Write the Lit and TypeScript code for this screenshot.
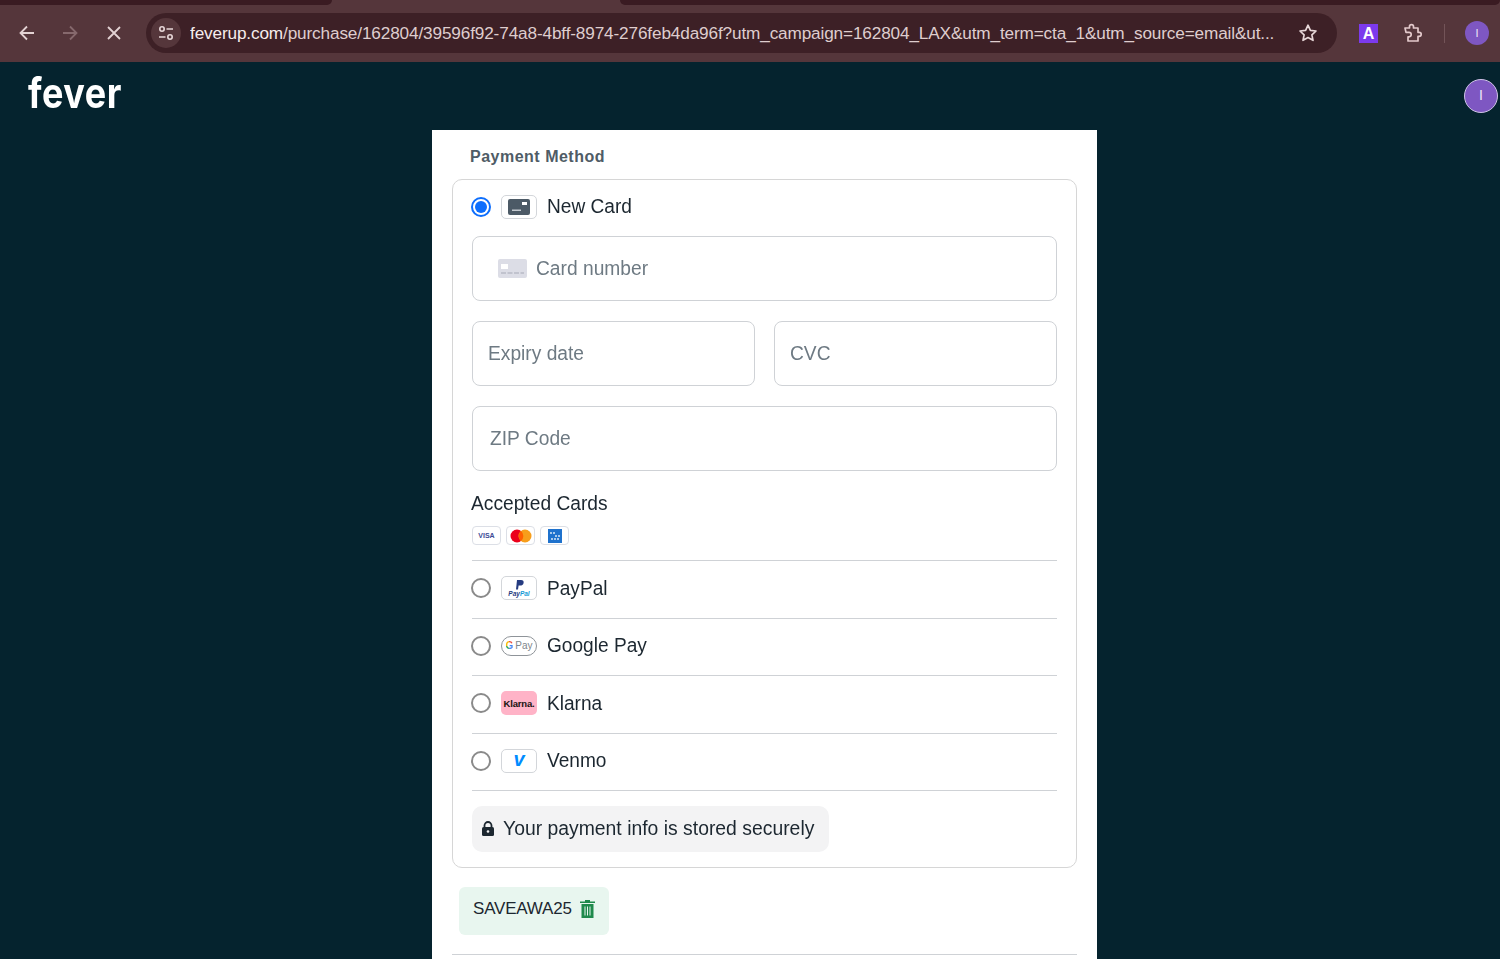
import { LitElement, html, css } from 'lit';
import { customElement } from 'lit/decorators.js';

const URL_TEXT = 'feverup.com/purchase/162804/39596f92-74a8-4bff-8974-276feb4da96f?utm_campaign=162804_LAX&utm_term=cta_1&utm_source=email&ut...';

@customElement('browser-bar')
export class BrowserBar extends LitElement {
    static styles = css`
        :host {
            display: block;
            height: 62px;
            background: #55363b;
            font-family: 'Liberation Sans', Arial, sans-serif;
            overflow: hidden;
        }

        .tabs {
            height: 5px;
            display: flex;
        }

        .tab {
            background: #3a1b22;
            border-radius: 0 0 8px 0;
        }

        .tab.one { width: 332px; }

        .tab.two {
            width: 880px;
            margin-left: 288px;
            border-radius: 0 0 8px 8px;
        }

        .row {
            display: flex;
            align-items: center;
            height: 40px;
            margin-top: 8px;
            padding-left: 17px;
        }

        .nav {
            width: 20px;
            height: 20px;
            margin-right: 23px;
            flex: none;
        }

        .nav.mid { margin-right: 24px; }
        .nav.last { margin-right: 22px; }

        .omni {
            width: 1191px;
            height: 40px;
            flex: none;
            display: flex;
            align-items: center;
            border-radius: 20px;
            background: #3d2026;
            padding: 0 19px 0 5px;
            box-sizing: border-box;
        }

        .tune {
            width: 30px;
            height: 30px;
            border-radius: 50%;
            background: #55363b;
            display: flex;
            align-items: center;
            justify-content: center;
            flex: none;
            margin-right: 9px;
        }

        .url {
            flex: 1;
            font-size: 17.2px;
            letter-spacing: -0.14px;
            color: #dfcdce;
            white-space: nowrap;
            overflow: hidden;
        }

        .url b {
            font-weight: 400;
            color: #f6eded;
        }

        .star { margin-left: 24px; flex: none; }

        .ext-a {
            width: 19px;
            height: 19px;
            margin-left: 22px;
            background: #7c3aed;
            color: #fff;
            font-size: 16px;
            font-weight: 700;
            line-height: 19px;
            text-align: center;
            flex: none;
        }

        .puzzle { margin-left: 25px; flex: none; }

        .sep {
            width: 1px;
            height: 19px;
            background: #735458;
            margin-left: 21px;
            flex: none;
        }

        .me {
            width: 24px;
            height: 24px;
            border-radius: 50%;
            background: #7e57c2;
            color: #efe6f7;
            font-size: 11px;
            line-height: 24px;
            text-align: center;
            margin-left: 20px;
            flex: none;
        }
    `;

    render() {
        const [host, ...rest] = URL_TEXT.split('/');
        return html`
            <div class="tabs"><div class="tab one"></div><div class="tab two"></div></div>
            <div class="row">
                <svg class="nav" viewBox="0 0 20 20" fill="none" stroke="#e3d2d3" stroke-width="1.8"><path d="M17 10H4M10 3.500 3.500 10l6.500 6.500"/></svg>
                <svg class="nav mid" viewBox="0 0 20 20" fill="none" stroke="#86696d" stroke-width="1.8"><path d="M3 10h13M10 3.500l6.500 6.500-6.500 6.500"/></svg>
                <svg class="nav last" viewBox="0 0 20 20" fill="none" stroke="#e3d2d3" stroke-width="1.8"><path d="M4 4l12 12M16 4 4 16"/></svg>
                <div class="omni">
                    <div class="tune">
                        <svg width="18" height="18" viewBox="0 0 18 18" fill="none" stroke="#e8d8d9" stroke-width="1.6">
                            <circle cx="5" cy="5" r="2.2"/><path d="M9.500 5H16M2 13h6.500"/><circle cx="13" cy="13" r="2.2"/>
                        </svg>
                    </div>
                    <div class="url"><b>${host}</b>/${rest.join('/')}</div>
                    <svg class="star" width="20" height="20" viewBox="0 0 20 20" fill="none" stroke="#e8d8d9" stroke-width="1.7" stroke-linejoin="round">
                        <path d="M10 2.200l2.400 5.100 5.600.7-4.100 3.800 1.100 5.500L10 14.600l-5 2.700 1.100-5.500L2 8l5.600-.7z"/>
                    </svg>
                </div>
                <div class="ext-a">A</div>
                <svg class="puzzle" width="20" height="20" viewBox="0 0 20 20" fill="none" stroke="#e3c9cb" stroke-width="1.7" stroke-linejoin="round">
                    <path d="M2 5h4.500V3.600a2 2 0 0 1 4 0V5H15v4.300h1.200a2 2 0 0 1 0 4H15V18H5v-4.200h1a2.200 2.200 0 0 0 0-4.400H3z"/>
                </svg>
                <div class="sep"></div>
                <div class="me">I</div>
            </div>
        `;
    }
}

@customElement('pay-option')
export class PayOption extends LitElement {
    static properties = {
        label: { type: String },
        checked: { type: Boolean },
    };

    declare label: string;
    declare checked: boolean;

    static styles = css`
        :host {
            display: flex;
            align-items: center;
            height: 56.5px;
            box-sizing: border-box;
            padding-bottom: 2px;
            font-family: 'Liberation Sans', Arial, sans-serif;
        }

        .radio {
            width: 20px;
            height: 20px;
            box-sizing: border-box;
            border-radius: 50%;
            border: 2px solid #8a8a8a;
            background: #fff;
            flex: none;
            margin-left: -1px;
            margin-right: 10px;
        }

        .radio.on {
            border: 2px solid #0d6efd;
            padding: 2px;
            background: #0d6efd content-box;
        }

        .logo {
            width: 36px;
            height: 24px;
            flex: none;
            margin-right: 10px;
            display: flex;
        }

        .text {
            font-size: 20px;
            color: #1c2730;
            transform-origin: left center;
            transform: scaleX(0.955);
        }
    `;

    render() {
        return html`
            <span class="radio ${this.checked ? 'on' : ''}"></span>
            <span class="logo"><slot></slot></span>
            <span class="text">${this.label}</span>
        `;
    }
}

@customElement('app-root')
export class AppRoot extends LitElement {
    static styles = css`
        :host {
            display: block;
            width: 1500px;
            height: 959px;
            overflow: hidden;
            background: #05232e;
            font-family: 'Liberation Sans', Arial, sans-serif;
        }

        .head {
            display: flex;
            justify-content: space-between;
            align-items: flex-start;
            height: 68px;
            padding: 0 2px 0 28px;
        }

        .brand {
            font-family: Inter, sans-serif;
            font-weight: 700;
            font-size: 36px;
            line-height: 62px;
            letter-spacing: 0.5px;
            color: #fff;
            transform-origin: left center;
            transform: scaleY(1.15);
        }

        .avatar {
            width: 34px;
            height: 34px;
            margin-top: 17px;
            box-sizing: border-box;
            border-radius: 50%;
            border: 1.5px solid #cfc3e6;
            background: #7e57c2;
            color: #efe6f7;
            font-size: 14px;
            line-height: 31px;
            text-align: center;
        }

        .card {
            width: 665px;
            height: 829px;
            margin-left: 432px;
            padding: 0 20px;
            box-sizing: border-box;
            background: #fff;
        }

        .title {
            height: 48.5px;
            font-size: 16px;
            font-weight: 700;
            line-height: 53px;
            letter-spacing: 0.5px;
            padding-left: 18px;
            color: #4f5c66;
        }

        .box {
            height: 689.5px;
            box-sizing: border-box;
            border: 1px solid #d6d6d6;
            border-radius: 10px;
            padding: 0 19px;
        }

        .field {
            height: 65px;
            box-sizing: border-box;
            border: 1px solid #cfd2d6;
            border-radius: 8px;
            display: flex;
            align-items: center;
            padding: 0 15px;
            font-size: 20px;
            color: #6e7a83;
            white-space: nowrap;
        }

        .field span {
            display: inline-block;
            transform-origin: left center;
            transform: scaleX(0.96);
        }

        .field.number { padding-left: 25px; gap: 9px; }
        .field.zip { padding-left: 17px; }

        .fields {
            display: grid;
            grid-template-columns: 283px 283px;
            gap: 20px 19px;
            margin-top: 20px;
        }

        .fields .wide { grid-column: 1 / -1; }

        .accepted {
            margin: 21px 0 0 -1px;
            font-size: 20px;
            line-height: 23px;
            color: #1c2730;
        }

        .accepted span {
            display: inline-block;
            transform-origin: left center;
            transform: scaleX(0.96);
        }

        .cards {
            display: flex;
            gap: 5px;
            margin-top: 11px;
            padding-bottom: 15px;
            border-bottom: 1px solid #cfd2d6;
        }

        .mini {
            width: 29px;
            height: 19px;
            box-sizing: border-box;
            border: 1px solid #dcdfe6;
            border-radius: 4px;
            display: flex;
            align-items: center;
            justify-content: center;
        }

        .visa {
            font-size: 7px;
            font-weight: 700;
            color: #3a4a94;
        }

        pay-option.line {
            border-bottom: 1px solid #cfd2d6;
            height: 57.5px;
        }

        .badge {
            width: 36px;
            height: 24px;
            box-sizing: border-box;
            border: 1px solid #d3d6da;
            border-radius: 5px;
            display: flex;
            flex-direction: column;
            align-items: center;
            justify-content: center;
        }

        .badge.gpay {
            border-radius: 12px;
            border-color: #8f9499;
            height: 20px;
            margin-top: 2px;
            flex-direction: row;
            font-size: 10px;
            color: #80868b;
        }

        .g {
            font-weight: 700;
            margin-right: 2px;
            background: conic-gradient(#ea4335 0 25%, #4285f4 25% 50%, #34a853 50% 75%, #fbbc05 75%);
            -webkit-background-clip: text;
            background-clip: text;
            color: transparent;
        }

        .badge.klarna {
            border: 0;
            background: #ffb3c7;
            font-size: 9.5px;
            font-weight: 700;
            color: #17120f;
            letter-spacing: -0.2px;
        }

        .badge.venmo {
            color: #008cff;
            font-size: 20px;
            font-weight: 700;
            font-style: italic;
            line-height: 20px;
            padding-bottom: 3px;
        }

        .pp {
            font-size: 6.5px;
            font-weight: 700;
            font-style: italic;
            color: #253b80;
            line-height: 7px;
        }

        .pp i { color: #179bd7; }

        .secure {
            display: inline-flex;
            align-items: center;
            gap: 8px;
            height: 46px;
            width: 357px;
            box-sizing: border-box;
            margin-top: 15px;
            padding: 0 0 2px 9px;
            border-radius: 10px;
            background: #f3f3f4;
            font-size: 20px;
            color: #1c2730;
            white-space: nowrap;
        }

        .secure span {
            display: inline-block;
            transform-origin: left center;
            transform: scaleX(0.968);
        }

        .promo {
            display: flex;
            align-items: center;
            gap: 8px;
            width: 150px;
            height: 48px;
            box-sizing: border-box;
            margin: 19px 0 0 7px;
            padding: 0 0 4px 14px;
            border-radius: 6px;
            background: #e8f6ef;
            font-size: 17px;
            letter-spacing: -0.2px;
            color: #1c2730;
        }

        .rule {
            height: 1px;
            margin-top: 19px;
            background: #cfd2d6;
        }
    `;

    render() {
        return html`
            <browser-bar></browser-bar>
            <div class="head">
                <div class="brand">fever</div>
                <div class="avatar">I</div>
            </div>
            <div class="card">
                <div class="title">Payment Method</div>
                <div class="box">
                    <pay-option label="New Card" checked>
                        <div class="badge">
                            <svg width="22" height="16" viewBox="0 0 22 16">
                                <rect width="22" height="16" rx="2" fill="#4c5a66"/>
                                <rect x="14" y="3" width="5" height="3" fill="#fff"/>
                                <path d="M4 10.500h9v1.500H4z" fill="#c4cad0"/>
                            </svg>
                        </div>
                    </pay-option>
                    <div class="field number">
                        <svg width="29" height="19" viewBox="0 0 29 19" fill="none">
                            <rect width="29" height="19" rx="2" fill="#dcdde6"/>
                            <rect x="3" y="5" width="7" height="5" fill="#fff"/>
                            <path d="M3 14h23" stroke="#b8bac6" stroke-width="1.500" stroke-dasharray="5 1.500"/>
                        </svg>
                        <span>Card number</span>
                    </div>
                    <div class="fields">
                        <div class="field"><span>Expiry date</span></div>
                        <div class="field"><span>CVC</span></div>
                        <div class="field wide zip"><span>ZIP Code</span></div>
                    </div>
                    <div class="accepted"><span>Accepted Cards</span></div>
                    <div class="cards">
                        <div class="mini visa">VISA</div>
                        <div class="mini">
                            <svg width="22" height="14" viewBox="0 0 22 14">
                                <circle cx="7" cy="7" r="6.500" fill="#eb001b"/>
                                <circle cx="15" cy="7" r="6.500" fill="#f79e1b"/>
                                <path d="M11 2a6.500 6.500 0 0 1 0 10 6.500 6.500 0 0 1 0-10z" fill="#ff5f00"/>
                            </svg>
                        </div>
                        <div class="mini">
                            <svg width="14" height="14" viewBox="0 0 14 14">
                                <rect width="14" height="14" fill="#1f72cd"/>
                                <path d="M2 4h5M7 7h5M3 10h9" stroke="#d8e8f8" stroke-width="1.400" stroke-dasharray="2 1"/>
                            </svg>
                        </div>
                    </div>
                    <pay-option class="line" label="PayPal">
                        <div class="badge">
                            <svg width="9" height="10" viewBox="0 0 9 10">
                                <path d="M2 0h4c2 0 3 1.200 2.600 3-.4 1.800-1.800 2.600-3.600 2.600H3.600L3 9.500H1z" fill="#253b80"/>
                            </svg>
                            <div class="pp">Pay<i>Pal</i></div>
                        </div>
                    </pay-option>
                    <pay-option class="line" label="Google Pay">
                        <div class="badge gpay"><span class="g">G</span>Pay</div>
                    </pay-option>
                    <pay-option class="line" label="Klarna">
                        <div class="badge klarna">Klarna.</div>
                    </pay-option>
                    <pay-option class="line" label="Venmo">
                        <div class="badge venmo">v</div>
                    </pay-option>
                    <div class="secure">
                        <svg width="14" height="15" viewBox="0 0 14 15">
                            <path d="M3.500 6V4.500a3.500 3.500 0 0 1 7 0V6" fill="none" stroke="#1c2730" stroke-width="1.800"/>
                            <rect x="1" y="6" width="12" height="9" rx="1.500" fill="#1c2730"/>
                            <circle cx="7" cy="10.500" r="1.300" fill="#f3f3f4"/>
                        </svg>
                        <span>Your payment info is stored securely</span>
                    </div>
                </div>
                <div class="promo">
                    SAVEAWA25
                    <svg width="15" height="18" viewBox="0 0 15 18">
                        <path d="M5 1.500V0h5v1.500h5V3H0V1.500zM1.500 4h12v14h-12z" fill="#1f8a4c"/>
                        <path d="M5 6.500v9M7.500 6.500v9M10 6.500v9" stroke="#e8f6ef" stroke-width="1"/>
                    </svg>
                </div>
                <div class="rule"></div>
            </div>
        `;
    }
}
